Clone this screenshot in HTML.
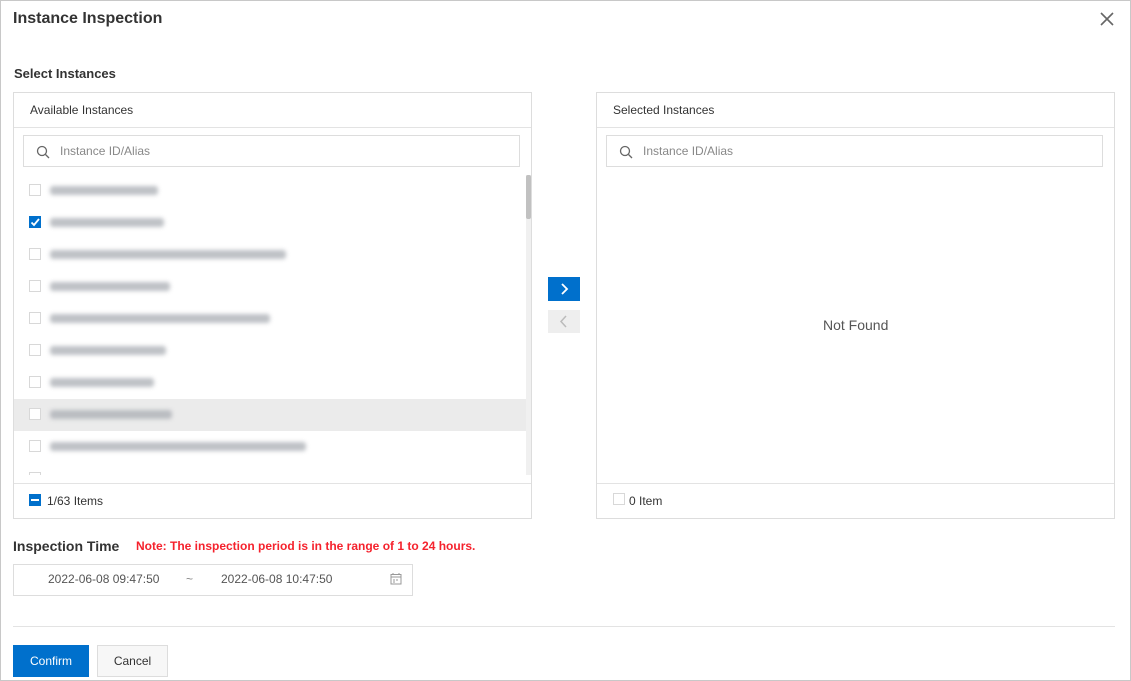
<!DOCTYPE html>
<html><head><meta charset="utf-8"><style>
*{box-sizing:border-box;margin:0;padding:0}
body{width:1131px;height:681px;background:#fff;font-family:"Liberation Sans",Arial,sans-serif;color:#333;position:relative;overflow:hidden;font-size:12px}
.frame{position:absolute;left:0;top:0;width:1131px;height:681px;border:1px solid #c8c8c8}
.abs{position:absolute}
.panel{position:absolute;border:1px solid #ddd;background:#fff}
.hline{position:absolute;height:1px;background:#e3e3e3}
.search{position:absolute;border:1px solid #ddd;height:32px}
.search span{position:absolute;left:36px;top:8px;color:#888;font-size:12px}
.cb{position:absolute;width:12px;height:12px;border:1px solid #d8d8d8;background:#fff}
.bar{position:absolute;height:9px;background:#a9adb3;filter:blur(2px);border-radius:3px;opacity:.75}
</style></head><body>
<div class="frame"></div>
<div class="abs" style="left:13px;top:10px;font-size:16px;font-weight:bold;color:#333">Instance Inspection</div>
<svg class="abs" style="left:1099px;top:11px" width="16" height="16"><path d="M2 2L14 14M14 2L2 14" stroke="#666" stroke-width="1.6"/></svg>
<div class="abs" style="left:14px;top:66px;font-size:13px;font-weight:bold">Select Instances</div>

<div class="panel" style="left:13px;top:92px;width:519px;height:427px"></div>
<div class="abs" style="left:30px;top:103px;color:#333">Available Instances</div>
<div class="hline" style="left:14px;top:127px;width:517px"></div>
<div class="search" style="left:23px;top:135px;width:497px"><svg class="abs" style="left:12px;top:9px" width="14" height="14"><circle cx="6" cy="6" r="4.5" stroke="#666" stroke-width="1.3" fill="none"/><path d="M9.5 9.5L13 13" stroke="#666" stroke-width="1.3"/></svg><span>Instance ID/Alias</span></div>
<div class="abs" style="left:14px;top:399px;width:513px;height:32px;background:#ebebeb"></div>
<div class="cb" style="left:29px;top:184px"></div>
<div class="cb" style="left:29px;top:216px;background:#0070cc;border-color:#0070cc"><svg width="12" height="12" style="position:absolute;left:-1px;top:-1px"><path d="M2.5 6.5L5 9L10 3" stroke="#fff" stroke-width="1.8" fill="none"/></svg></div>
<div class="cb" style="left:29px;top:248px"></div>
<div class="cb" style="left:29px;top:280px"></div>
<div class="cb" style="left:29px;top:312px"></div>
<div class="cb" style="left:29px;top:344px"></div>
<div class="cb" style="left:29px;top:376px"></div>
<div class="cb" style="left:29px;top:408px"></div>
<div class="cb" style="left:29px;top:440px"></div>
<div class="abs" style="left:29px;top:472px;width:12px;height:3px;border:1px solid #d8d8d8;border-bottom:none"></div>
<div class="bar" style="left:50px;top:186px;width:108px"></div>
<div class="bar" style="left:50px;top:218px;width:114px"></div>
<div class="bar" style="left:50px;top:250px;width:236px"></div>
<div class="bar" style="left:50px;top:282px;width:120px"></div>
<div class="bar" style="left:50px;top:314px;width:220px"></div>
<div class="bar" style="left:50px;top:346px;width:116px"></div>
<div class="bar" style="left:50px;top:378px;width:104px"></div>
<div class="bar" style="left:50px;top:410px;width:122px"></div>
<div class="bar" style="left:50px;top:442px;width:256px"></div>
<div class="abs" style="left:526px;top:175px;width:5px;height:300px;background:#f0f0f0"></div>
<div class="abs" style="left:526px;top:175px;width:5px;height:44px;background:#c1c1c1;border-radius:2px"></div>
<div class="hline" style="left:14px;top:483px;width:517px"></div>
<div class="abs" style="left:29px;top:494px;width:12px;height:12px;background:#0070cc"><div style="position:absolute;left:2px;top:5px;width:8px;height:2px;background:#fff"></div></div>
<div class="abs" style="left:47px;top:494px">1/63 Items</div>

<div class="abs" style="left:548px;top:277px;width:32px;height:24px;background:#0070cc"><svg width="32" height="24"><path d="M14 7L19 12L14 17" stroke="#fff" stroke-width="1.8" fill="none"/></svg></div>
<div class="abs" style="left:548px;top:310px;width:32px;height:23px;background:#eee"><svg width="32" height="23"><path d="M18 6L13 11.5L18 17" stroke="#bbb" stroke-width="1.5" fill="none"/></svg></div>

<div class="panel" style="left:596px;top:92px;width:519px;height:427px"></div>
<div class="abs" style="left:613px;top:103px">Selected Instances</div>
<div class="hline" style="left:597px;top:127px;width:517px"></div>
<div class="search" style="left:606px;top:135px;width:497px"><svg class="abs" style="left:12px;top:9px" width="14" height="14"><circle cx="6" cy="6" r="4.5" stroke="#666" stroke-width="1.3" fill="none"/><path d="M9.5 9.5L13 13" stroke="#666" stroke-width="1.3"/></svg><span>Instance ID/Alias</span></div>
<div class="abs" style="left:823px;top:317px;font-size:14px;color:#555">Not Found</div>
<div class="hline" style="left:597px;top:483px;width:517px"></div>
<div class="cb" style="left:613px;top:493px"></div>
<div class="abs" style="left:629px;top:494px">0 Item</div>

<div class="abs" style="left:13px;top:538px;font-size:14px;font-weight:bold;color:#333">Inspection Time</div>
<div class="abs" style="left:136px;top:539px;font-size:12px;font-weight:bold;color:#f5222d">Note: The inspection period is in the range of 1 to 24 hours.</div>
<div class="abs" style="left:13px;top:564px;width:400px;height:32px;border:1px solid #ddd"></div>
<div class="abs" style="left:48px;top:572px;color:#555">2022-06-08 09:47:50</div>
<div class="abs" style="left:186px;top:572px;color:#888">~</div>
<div class="abs" style="left:221px;top:572px;color:#555">2022-06-08 10:47:50</div>
<svg class="abs" style="left:390px;top:573px" width="12" height="12"><rect x="1" y="1.5" width="10" height="9.5" stroke="#999" fill="none"/><path d="M1 4H11M3 0V2M9 0V2M3 7H5M6 7H8M3 9H5" stroke="#999"/></svg>
<div class="hline" style="left:13px;top:626px;width:1102px"></div>
<div class="abs" style="left:13px;top:645px;width:76px;height:32px;background:#0070cc;color:#fff;text-align:center;line-height:32px">Confirm</div>
<div class="abs" style="left:97px;top:645px;width:71px;height:32px;border:1px solid #ddd;background:#f7f7f7;text-align:center;line-height:30px;color:#333">Cancel</div>
</body></html>
